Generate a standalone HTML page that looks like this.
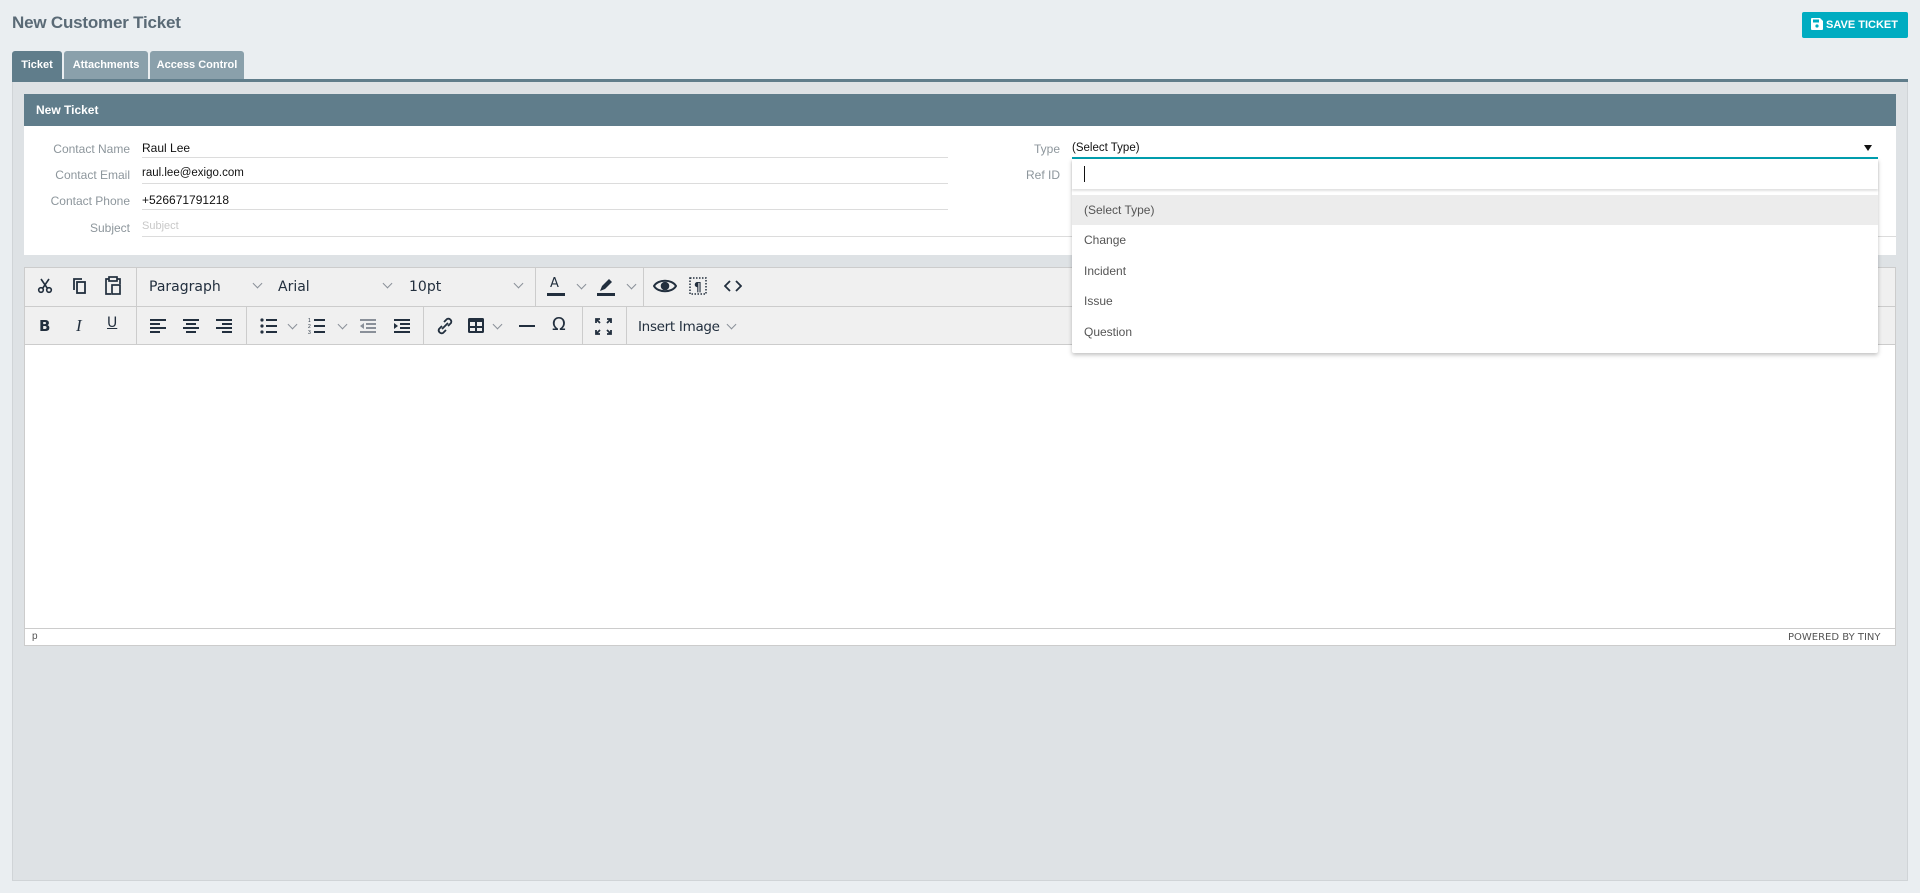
<!DOCTYPE html>
<html><head><meta charset="utf-8"><style>
*{box-sizing:border-box;margin:0;padding:0}
body{width:1920px;height:893px;background:#eaeef1;font-family:"Liberation Sans",Arial,sans-serif;position:relative;overflow:hidden}
.a{position:absolute}
.lbl{position:absolute;font-size:12px;color:#8d969c;text-align:right;width:120px}
.val{position:absolute;font-size:12px;color:#111}
.line{position:absolute;height:1px;background:#dcdcdc}
.tb{position:absolute;color:#222f3e;font-family:"DejaVu Sans","Liberation Sans",sans-serif}
.sep{position:absolute;width:1px;background:#cccccc}
.chev{position:absolute;width:7px;height:7px;border-right:1.5px solid #8a9099;border-bottom:1.5px solid #8a9099;transform:rotate(45deg)}
.item{position:absolute;left:1084px;font-size:12px;color:#555}
</style></head><body>
<div class="a" style="left:12px;top:13px;font-size:17px;color:#5a6a76;font-weight:bold;letter-spacing:-0.2px">New Customer Ticket</div>
<div class="a" style="left:1802px;top:12px;width:106px;height:26px;background:#00acc1;border-radius:2px;color:#fff;font-size:11px;font-weight:bold;line-height:26px;padding-left:9px">
<svg width="12" height="12" viewBox="0 0 12 12" style="vertical-align:-2px"><path d="M0 1a1 1 0 0 1 1-1h8l3 3v8a1 1 0 0 1-1 1H1a1 1 0 0 1-1-1z" fill="#fff"/><rect x="2" y="1.5" width="6" height="3" fill="#00acc1"/><circle cx="6" cy="8" r="1.6" fill="#00acc1"/></svg> SAVE TICKET</div>
<!-- tabs -->
<div class="a" style="left:12px;top:51px;width:50px;height:28px;background:#607d8b;border-radius:3px 3px 0 0;color:#fff;font-size:11px;font-weight:bold;line-height:28px;text-align:center">Ticket</div>
<div class="a" style="left:64px;top:51px;width:84px;height:28px;background:#8aa0ab;border-radius:3px 3px 0 0;color:#fff;font-size:11px;font-weight:bold;line-height:28px;text-align:center">Attachments</div>
<div class="a" style="left:150px;top:51px;width:94px;height:28px;background:#8aa0ab;border-radius:3px 3px 0 0;color:#fff;font-size:11px;font-weight:bold;line-height:28px;text-align:center">Access Control</div>
<div class="a" style="left:12px;top:79px;width:1896px;height:3px;background:#607d8b"></div>
<div class="a" style="left:12px;top:82px;width:1896px;height:799px;background:#dee2e5;border:1px solid #d0d4d7;border-top:none"></div>
<!-- header -->
<div class="a" style="left:24px;top:94px;width:1872px;height:32px;background:#607d8b;color:#fff;font-size:12px;font-weight:bold;line-height:32px;padding-left:12px">New Ticket</div>
<div class="a" style="left:24px;top:126px;width:1872px;height:129px;background:#fff"></div>
<div class="lbl" style="left:10px;top:142px">Contact Name</div>
<div class="val" style="left:142px;top:141px">Raul Lee</div><div class="line" style="left:142px;top:157px;width:806px"></div>
<div class="lbl" style="left:10px;top:168px">Contact Email</div>
<div class="val" style="left:142px;top:167px;font-size:11.5px">raul.lee@exigo.com</div><div class="line" style="left:142px;top:183px;width:806px"></div>
<div class="lbl" style="left:10px;top:194px">Contact Phone</div>
<div class="val" style="left:142px;top:193px">+526671791218</div><div class="line" style="left:142px;top:209px;width:806px"></div>
<div class="lbl" style="left:10px;top:221px">Subject</div>
<div class="val" style="left:142px;top:220px;color:#c8c8c8;font-size:11px">Subject</div><div class="line" style="left:142px;top:236px;width:806px"></div>
<div class="lbl" style="left:940px;top:142px">Type</div>
<div class="lbl" style="left:940px;top:168px">Ref ID</div>
<div class="val" style="left:1072px;top:142px;font-size:11.5px">(Select Type)</div>
<div class="a" style="left:1864px;top:145px;width:0;height:0;border-left:4px solid transparent;border-right:4px solid transparent;border-top:6px solid #111"></div>
<div class="line" style="left:948px;top:236px;width:126px"></div>
<div class="line" style="left:1878px;top:236px;width:18px"></div>
<!-- editor -->
<div class="a" style="left:24px;top:267px;width:1872px;height:379px;background:#fff;border:1px solid #ccc"></div>
<div class="a" style="left:25px;top:268px;width:1870px;height:77px;background:#f0f0f0"></div>
<div class="a" style="left:25px;top:306px;width:1870px;height:1px;background:#ccc"></div>
<div class="a" style="left:25px;top:344px;width:1870px;height:1px;background:#ccc"></div>
<div class="a" style="left:25px;top:628px;width:1870px;height:1px;background:#ccc"></div>
<div class="a" style="left:32px;top:631px;font-size:10px;color:#555">p</div>
<div class="a" style="left:1788px;top:632px;font-size:10px;color:#555;font-family:'DejaVu Sans',sans-serif">POWERED BY TINY</div>
<!-- separators -->
<div class="sep" style="left:136px;top:268px;height:38px"></div>
<div class="sep" style="left:535px;top:268px;height:38px"></div>
<div class="sep" style="left:643px;top:268px;height:38px"></div>
<div class="sep" style="left:136px;top:307px;height:37px"></div>
<div class="sep" style="left:246px;top:307px;height:37px"></div>
<div class="sep" style="left:423px;top:307px;height:37px"></div>
<div class="sep" style="left:582px;top:307px;height:37px"></div>
<div class="sep" style="left:626px;top:307px;height:37px"></div>
<!-- row1 icons -->
<svg class="a" style="left:37px;top:278px" width="16" height="16" viewBox="0 0 16 16" fill="none" stroke="#222f3e" stroke-width="1.6"><circle cx="4" cy="12" r="2.3"/><circle cx="12" cy="12" r="2.3"/><path d="M5.5 10.5L12 1M10.5 10.5L4 1"/></svg>
<svg class="a" style="left:72px;top:277px" width="16" height="18" viewBox="0 0 16 18" fill="none" stroke="#222f3e" stroke-width="1.8"><path d="M2 13V2h8"/><rect x="5" y="5" width="8" height="11"/></svg>
<svg class="a" style="left:104px;top:276px" width="18" height="19" viewBox="0 0 18 19" fill="none" stroke="#222f3e" stroke-width="1.7"><path d="M5 3H2v15h5M13 3h3v5"/><rect x="5" y="1" width="8" height="4"/><rect x="8" y="9" width="8" height="9"/></svg>
<div class="tb" style="left:149px;top:279px;font-size:14px">Paragraph</div><div class="chev" style="left:254px;top:280px"></div>
<div class="tb" style="left:278px;top:279px;font-size:14px">Arial</div><div class="chev" style="left:384px;top:280px"></div>
<div class="tb" style="left:409px;top:279px;font-size:14px">10pt</div><div class="chev" style="left:515px;top:280px"></div>
<div class="tb" style="left:550px;top:276px;font-size:13px">A</div><div class="a" style="left:547px;top:293px;width:18px;height:3px;background:#222f3e"></div><div class="chev" style="left:578px;top:281px"></div>
<svg class="a" style="left:597px;top:277px" width="18" height="20" viewBox="0 0 18 20"><path d="M3 14l2-5 7-7 3 3-7 7z" fill="#222f3e"/><rect x="0" y="16" width="18" height="3" fill="#222f3e"/></svg><div class="chev" style="left:628px;top:281px"></div>
<svg class="a" style="left:653px;top:278px" width="24" height="16" viewBox="0 0 24 16" fill="none" stroke="#222f3e" stroke-width="2"><path d="M1 8C5 1 19 1 23 8 19 15 5 15 1 8z"/><circle cx="12" cy="8" r="3.3" fill="#222f3e"/></svg>
<svg class="a" style="left:689px;top:277px" width="18" height="18" viewBox="0 0 18 18"><rect x="1" y="1" width="16" height="16" fill="none" stroke="#222f3e" stroke-width="1.5" stroke-dasharray="1.5 1.5"/><text x="5" y="14" font-size="12" font-weight="bold" fill="#222f3e" font-family="DejaVu Sans">¶</text></svg>
<svg class="a" style="left:724px;top:280px" width="18" height="12" viewBox="0 0 18 12" fill="none" stroke="#222f3e" stroke-width="1.8"><path d="M6 1L1 6l5 5M12 1l5 5-5 5"/></svg>
<!-- row2 icons -->
<div class="tb" style="left:39px;top:317px;font-size:15px;font-weight:bold">B</div>
<div class="tb" style="left:76px;top:316px;font-size:17px;font-style:italic;font-family:'Liberation Serif',serif">I</div>
<div class="tb" style="left:107px;top:315px;font-size:14px;text-decoration:underline">U</div>
<svg class="a" style="left:150px;top:318px" width="18" height="16" viewBox="0 0 18 16" fill="#222f3e"><rect y="1" width="16" height="2"/><rect y="5" width="10" height="2"/><rect y="9" width="16" height="2"/><rect y="13" width="10" height="2"/></svg>
<svg class="a" style="left:183px;top:318px" width="18" height="16" viewBox="0 0 18 16" fill="#222f3e"><rect y="1" width="16" height="2"/><rect x="3" y="5" width="10" height="2"/><rect y="9" width="16" height="2"/><rect x="3" y="13" width="10" height="2"/></svg>
<svg class="a" style="left:216px;top:318px" width="18" height="16" viewBox="0 0 18 16" fill="#222f3e"><rect y="1" width="16" height="2"/><rect x="6" y="5" width="10" height="2"/><rect y="9" width="16" height="2"/><rect x="6" y="13" width="10" height="2"/></svg>
<svg class="a" style="left:260px;top:318px" width="18" height="16" viewBox="0 0 18 16" fill="#222f3e"><circle cx="2" cy="2" r="1.6"/><circle cx="2" cy="8" r="1.6"/><circle cx="2" cy="14" r="1.6"/><rect x="6" y="1" width="11" height="2"/><rect x="6" y="7" width="11" height="2"/><rect x="6" y="13" width="11" height="2"/></svg><div class="chev" style="left:289px;top:321px"></div>
<svg class="a" style="left:308px;top:317px" width="18" height="17" viewBox="0 0 18 17" fill="#222f3e"><rect x="6" y="2" width="11" height="2"/><rect x="6" y="8" width="11" height="2"/><rect x="6" y="14" width="11" height="2"/><text x="0" y="5" font-size="5">1</text><text x="0" y="11" font-size="5">2</text><text x="0" y="17" font-size="5">3</text></svg><div class="chev" style="left:339px;top:321px"></div>
<svg class="a" style="left:359px;top:318px" width="18" height="16" viewBox="0 0 18 16" fill="#8a9099"><rect x="1" y="1" width="16" height="2"/><rect x="7" y="5" width="10" height="2"/><rect x="7" y="9" width="10" height="2"/><rect x="1" y="13" width="16" height="2"/><path d="M5 5v6L1 8z"/></svg>
<svg class="a" style="left:393px;top:318px" width="18" height="16" viewBox="0 0 18 16" fill="#222f3e"><rect x="1" y="1" width="16" height="2"/><rect x="7" y="5" width="10" height="2"/><rect x="7" y="9" width="10" height="2"/><rect x="1" y="13" width="16" height="2"/><path d="M1 5v6l4-3z"/></svg>
<svg class="a" style="left:436px;top:316px" width="18" height="20" viewBox="0 0 18 20" fill="none" stroke="#222f3e" stroke-width="1.8"><path d="M8 6l3-3a3 3 0 0 1 4 4l-3 3M10 14l-3 3a3 3 0 0 1-4-4l3-3M6 13l6-6"/></svg>
<svg class="a" style="left:467px;top:317px" width="18" height="17" viewBox="0 0 18 17"><rect x="1" y="1" width="16" height="15" rx="1.5" fill="#222f3e"/><rect x="3" y="5" width="5" height="4" fill="#f0f0f0"/><rect x="10" y="5" width="5" height="4" fill="#f0f0f0"/><rect x="3" y="11" width="5" height="3" fill="#f0f0f0"/><rect x="10" y="11" width="5" height="3" fill="#f0f0f0"/></svg><div class="chev" style="left:494px;top:321px"></div>
<div class="a" style="left:519px;top:325px;width:16px;height:2px;background:#222f3e"></div>
<div class="tb" style="left:552px;top:314px;font-size:18px">Ω</div>
<svg class="a" style="left:595px;top:318px" width="17" height="17" viewBox="0 0 17 17" fill="none" stroke="#222f3e" stroke-width="1.8"><path d="M1 5V1h4M12 1h4v4M16 12v4h-4M5 16H1v-4M1 1l4 4M16 1l-4 4M16 16l-4-4M1 16l4-4"/></svg>
<div class="tb" style="left:638px;top:319px;font-size:13.5px;letter-spacing:-0.3px">Insert Image</div><div class="chev" style="left:728px;top:321px"></div>
<!-- dropdown -->
<div class="a" style="left:1072px;top:157px;width:806px;height:2px;background:#00a0b0"></div>
<div class="a" style="left:1072px;top:159px;width:806px;height:194px;background:#fff;box-shadow:0 2px 4px rgba(0,0,0,.25);border-radius:0 0 2px 2px"></div>
<div class="a" style="left:1072px;top:159px;width:806px;height:30px;background:#fff;box-shadow:0 2px 2px rgba(0,0,0,.12)"></div>
<div class="a" style="left:1084px;top:166px;width:1px;height:16px;background:#111"></div>
<div class="a" style="left:1072px;top:195px;width:806px;height:30px;background:#ececec"></div>
<div class="item" style="top:203px">(Select Type)</div>
<div class="item" style="top:233px">Change</div>
<div class="item" style="top:264px">Incident</div>
<div class="item" style="top:294px">Issue</div>
<div class="item" style="top:325px">Question</div>
</body></html>
